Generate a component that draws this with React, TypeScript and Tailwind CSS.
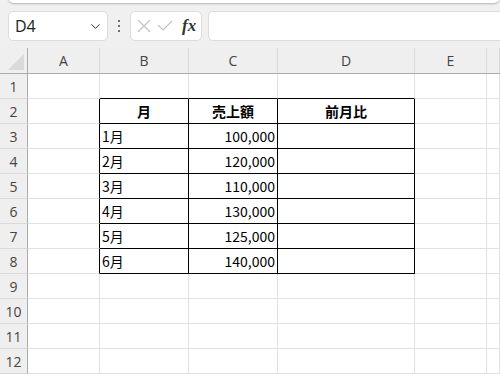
import { ChevronDown } from 'lucide-react';

const cols = [
  { key: 'A', w: 'w-[72px]' },
  { key: 'B', w: 'w-[89px]' },
  { key: 'C', w: 'w-[89px]' },
  { key: 'D', w: 'w-[137px]' },
  { key: 'E', w: 'w-[72px]' },
  { key: 'F', w: 'flex-1' },
];

const data: Record<number, string[]> = {
  2: ['月', '売上額', '前月比'],
  3: ['1月', '100,000', ''],
  4: ['2月', '120,000', ''],
  5: ['3月', '110,000', ''],
  6: ['4月', '130,000', ''],
  7: ['5月', '125,000', ''],
  8: ['6月', '140,000', ''],
};

const rows = Array.from({ length: 12 }, (_, i) => i + 1);

function inTable(r: number, c: number) {
  return r >= 2 && r <= 8 && c >= 1 && c <= 3;
}

function Cell({ r, c }: { r: number; c: number }) {
  const col = cols[c];
  const table = inTable(r, c);
  const rightBlack = table || (c === 0 && r >= 2 && r <= 8);
  const bottomBlack = table || (r === 1 && c >= 1 && c <= 3);
  const text = table ? data[r][c - 1] : '';
  const header = r === 2;
  const numeric = c === 2 && !header;

  return (
    <div
      className={`${col.w} shrink-0 h-[25px] border-r border-b flex items-center px-[2px] text-[14px] text-black ${
        rightBlack ? 'border-r-black' : 'border-r-[#e1e1e1]'
      } ${bottomBlack ? 'border-b-black' : 'border-b-[#e1e1e1]'} ${
        header ? 'justify-center font-bold' : numeric ? 'justify-end' : 'justify-start'
      }`}
    >
      {text}
    </div>
  );
}

export default function App() {
  return (
    <div
      className="w-[500px] h-[374px] overflow-hidden bg-white"
      style={{ fontFamily: '"Noto Sans CJK JP", "Noto Sans", sans-serif' }}
    >
      {/* formula bar */}
      <div className="h-[48px] bg-[#f0f0f0] relative">
        <div className="absolute left-[8px] right-0 top-[-6px] h-[9px] bg-white rounded-b-md shadow-[0_1px_2px_rgba(0,0,0,0.25)]" />
        <div className="flex items-center pt-[11px] pl-[8px] gap-0">
          <div className="w-[100px] h-[30px] bg-white border border-[#dcdcdc] rounded-[5px] flex items-center justify-between pl-[6px] pr-[4px]">
            <span className="text-[16px] text-[#222]" style={{ fontFamily: '"Open Sans", sans-serif' }}>
              D4
            </span>
            <ChevronDown size={15} strokeWidth={1.6} className="text-[#333]" />
          </div>
          <div className="w-[22px] flex flex-col items-center gap-[3px]">
            <span className="w-[2px] h-[2px] bg-[#444] rounded-full" />
            <span className="w-[2px] h-[2px] bg-[#444] rounded-full" />
            <span className="w-[2px] h-[2px] bg-[#444] rounded-full" />
          </div>
          <div className="w-[72px] h-[30px] bg-white border border-[#dcdcdc] rounded-[5px] flex items-center pl-[6px] gap-[6px]">
            <svg width="14" height="14" viewBox="0 0 14 14" className="text-[#c4c4c4]">
              <path d="M1 1L13 13M13 1L1 13" stroke="currentColor" strokeWidth="1.2" fill="none" />
            </svg>
            <svg width="16" height="12" viewBox="0 0 16 12" className="text-[#c4c4c4]">
              <path d="M1 5L6 10L15 1" stroke="currentColor" strokeWidth="1.2" fill="none" />
            </svg>
            <span
              className="text-[17px] italic font-semibold text-[#333] ml-[3px]"
              style={{ fontFamily: '"Liberation Serif", "DejaVu Serif", serif' }}
            >
              fx
            </span>
          </div>
          <div className="flex-1 ml-[6px] h-[30px] bg-white border border-[#dcdcdc] rounded-l-[5px] border-r-0" />
        </div>
      </div>

      {/* column headers */}
      <div className="flex h-[26px] bg-[#efefef] border-b border-b-[#ababab]">
        <div className="w-[28px] shrink-0 border-r border-r-[#ababab] relative">
          <svg width="16" height="16" viewBox="0 0 16 16" className="absolute right-[3px] bottom-[3px]">
            <path d="M16 0L16 16L0 16Z" fill="#dadada" />
          </svg>
        </div>
        {cols.map((col) => (
          <div
            key={col.key}
            className={`${col.w} shrink-0 border-r border-r-[#d9d9d9] flex items-center justify-center text-[14px] text-[#444]`}
            style={{ fontFamily: '"Open Sans", sans-serif' }}
          >
            {col.key === 'F' ? '' : col.key}
          </div>
        ))}
      </div>

      {/* rows */}
      {rows.map((r) => (
        <div key={r} className="flex">
          <div
            className="w-[28px] shrink-0 h-[25px] bg-[#efefef] border-r border-r-[#ababab] border-b border-b-[#d9d9d9] flex items-center justify-center text-[14px] text-[#444]"
            style={{ fontFamily: '"Open Sans", sans-serif' }}
          >
            {r}
          </div>
          {cols.map((_, c) => (
            <Cell key={c} r={r} c={c} />
          ))}
        </div>
      ))}
    </div>
  );
}
